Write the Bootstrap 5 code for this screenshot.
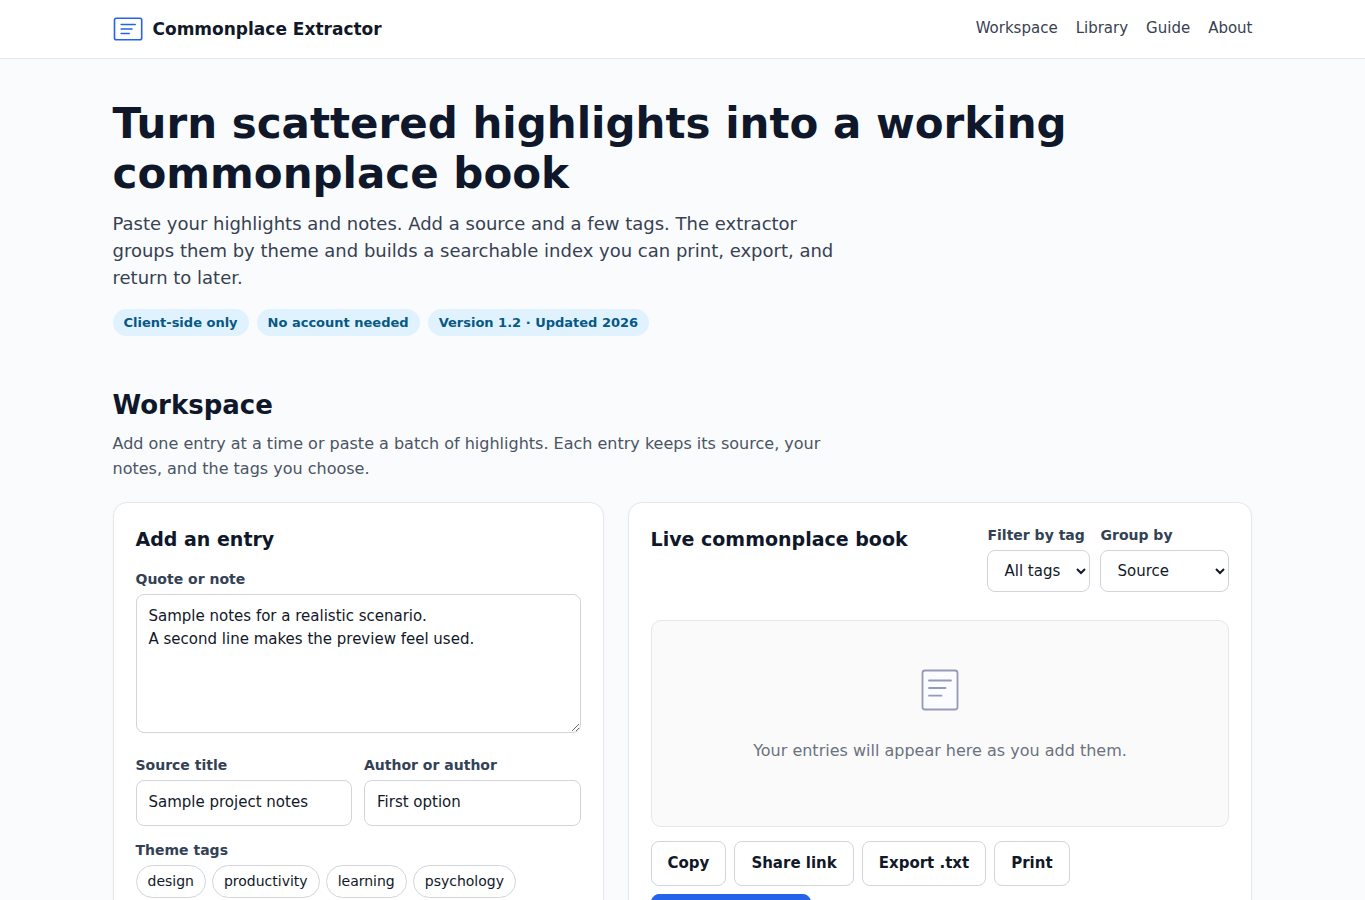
<!DOCTYPE html>
<html lang="en">
<head>
<meta charset="utf-8">
<meta name="viewport" content="width=device-width, initial-scale=1">
<title>Commonplace Extractor</title>
<link href="https://cdn.jsdelivr.net/npm/bootstrap@5.3.0/dist/css/bootstrap.min.css" rel="stylesheet">
<style>
:root { --ink: #0f172a; --slate: #334155; --line: #e5e7eb; --edge: #d1d5db; }
body { background: #f9fbfd; color: #111827; font-family: "DejaVu Sans", sans-serif; font-size: 16px; line-height: 25px; }
.container { max-width: 1164px; }
.site-header { border-bottom: 1px solid var(--line); }
.site-header .container { min-height: 58px; }
.brand-link { color: #111827; font-size: 17px; font-weight: 700; gap: 10px; }
.site-nav { gap: 18px; font-size: 15px; }
.site-nav a { color: #374151; line-height: 24px; margin-bottom: 2px; }
h1, h2, h3 { color: var(--ink); font-weight: 700; margin: 0; }
h1 { font-size: 42px; line-height: 50px; }
h2 { font-size: 26px; line-height: 32px; }
h3 { font-size: 19px; line-height: 28px; }
.hero { padding-top: 40px; }
.intro { color: #374151; font-size: 18px; line-height: 27px; max-width: 728px; margin: 11px 0 18px; }
.pill { background: #e0f2fe; color: #075985; font-size: 13px; font-weight: 700; line-height: 19px; padding: 4px 11px; }
.workspace { padding: 53px 0 48px; }
.note { color: #4b5563; max-width: 720px; margin: 10px 0 21px; }
.board { display: grid; grid-template-columns: minmax(0, 1fr); gap: 24px; align-items: start; }
@media (min-width: 992px) { .board { grid-template-columns: minmax(0, 11fr) minmax(0, 14fr); } }
.panel { background: #fff; border: 1px solid var(--line); border-radius: 14px; padding: 22px; box-shadow: 0 1px 3px rgba(15, 23, 42, .04); }
.panel-head { margin-bottom: 28px; }
.field-label { display: block; color: var(--slate); font-size: 14px; font-weight: 700; line-height: 20px; margin: 0 0 5px; }
.field { border: 1px solid var(--edge); border-radius: 8px; font-size: 15px; line-height: 23px; color: #111827; padding: 10px 12px; }
input.field { height: 46px; padding-bottom: 12px; }
textarea.field { min-height: 139px; margin-bottom: 22px; }
.field-pair { gap: 12px; margin-bottom: 14px; }
.pick-row { gap: 10px; }
.pick { display: block; height: 42px; background: #fff; }
.pick-tag { width: 103px; }
.pick-group { width: 129px; }
.chip-row { gap: 6px; }
.chip { background: #fff; border: 1px solid var(--edge); color: #111827; font-size: 14px; line-height: 21px; padding: 5px 11px; }
.empty-state { background: #fafafa; border: 1px solid var(--line); border-radius: 10px; color: #6b7280; padding: 44px 20px; min-height: 207px; }
.empty-state p { margin: 23px 0 0; }
.tool-row { margin-top: 14px; }
.tool { border: 1px solid var(--edge); border-radius: 8px; background: #fff; color: #111827; font-size: 15px; font-weight: 700; line-height: 23px; padding: 10px 16px; }
.tool-main { background: #2563eb; border-color: #2563eb; color: #fff; min-width: 160px; }
</style>
</head>
<body>
<header class="site-header bg-white">
  <div class="container d-flex flex-wrap align-items-center justify-content-between">
    <a class="brand-link d-flex align-items-center text-decoration-none" href="#">
      <svg width="30" height="24" viewBox="0 0 30 24" fill="none" stroke="#2563eb" stroke-width="1.6" stroke-linecap="round" aria-hidden="true"><rect x="1.500" y="1.300" width="27.200" height="21.400" rx="1.800"/><path d="M8.200 7.500h14M8.200 12h10.800M8.200 16.500h8"/></svg>
      Commonplace Extractor
    </a>
    <nav class="site-nav d-flex" aria-label="Main">
      <a class="text-decoration-none" href="#workspace">Workspace</a>
      <a class="text-decoration-none" href="#library">Library</a>
      <a class="text-decoration-none" href="#guide">Guide</a>
      <a class="text-decoration-none" href="#about">About</a>
    </nav>
  </div>
</header>
<main class="container">
  <section class="hero">
    <h1>Turn scattered highlights into a working commonplace book</h1>
    <p class="intro">Paste your highlights and notes. Add a source and a few tags. The extractor groups them by theme and builds a searchable index you can print, export, and return to later.</p>
    <div class="d-flex flex-wrap gap-2">
      <span class="pill rounded-pill">Client-side only</span>
      <span class="pill rounded-pill">No account needed</span>
      <span class="pill rounded-pill">Version 1.2 · Updated 2026</span>
    </div>
  </section>
  <section class="workspace" id="workspace">
    <h2>Workspace</h2>
    <p class="note">Add one entry at a time or paste a batch of highlights. Each entry keeps its source, your notes, and the tags you choose.</p>
    <div class="board">
      <form class="panel">
        <h3 class="mb-3">Add an entry</h3>
        <label class="field-label" for="quote">Quote or note</label>
        <textarea class="field d-block w-100" id="quote">Sample notes for a realistic scenario.
A second line makes the preview feel used.</textarea>
        <div class="field-pair d-flex">
          <div class="flex-fill">
            <label class="field-label" for="source">Source title</label>
            <input class="field d-block w-100" id="source" type="text" value="Sample project notes">
          </div>
          <div class="flex-fill">
            <label class="field-label" for="author">Author or author</label>
            <input class="field d-block w-100" id="author" type="text" value="First option">
          </div>
        </div>
        <div role="group" aria-labelledby="tags-label">
          <span class="field-label" id="tags-label">Theme tags</span>
          <div class="chip-row d-flex flex-wrap">
            <button class="chip rounded-pill" type="button">design</button>
            <button class="chip rounded-pill" type="button">productivity</button>
            <button class="chip rounded-pill" type="button">learning</button>
            <button class="chip rounded-pill" type="button">psychology</button>
          </div>
        </div>
      </form>
      <section class="panel">
        <div class="panel-head d-flex flex-wrap justify-content-between">
          <h3>Live commonplace book</h3>
          <div class="pick-row d-flex">
            <div>
              <label class="field-label" for="filter">Filter by tag</label>
              <select class="field pick pick-tag" id="filter"><option>All tags</option></select>
            </div>
            <div>
              <label class="field-label" for="group">Group by</label>
              <select class="field pick pick-group" id="group"><option>Source</option><option>Theme</option></select>
            </div>
          </div>
        </div>
        <div class="empty-state d-flex flex-column align-items-center text-center">
          <svg width="50" height="50" viewBox="0 0 50 50" fill="none" stroke="#949bb9" stroke-width="1.8" stroke-linecap="round" aria-hidden="true"><rect x="7.500" y="5.500" width="35" height="39" rx="2.500" fill="#fbfcff"/><path d="M14 15.500h22M14 23h16.500M14 30.700h12.500"/></svg>
          <p>Your entries will appear here as you add them.</p>
        </div>
        <div class="tool-row d-flex flex-wrap gap-2">
          <button class="tool" type="button">Copy</button>
          <button class="tool" type="button">Share link</button>
          <button class="tool" type="button">Export .txt</button>
          <button class="tool" type="button">Print</button>
          <div class="w-100 d-flex"><button class="tool tool-main" type="button">Save book</button></div>
        </div>
      </section>
    </div>
  </section>
</main>
<script src="https://cdn.jsdelivr.net/npm/bootstrap@5.3.0/dist/js/bootstrap.bundle.min.js"></script>
</body>
</html>
